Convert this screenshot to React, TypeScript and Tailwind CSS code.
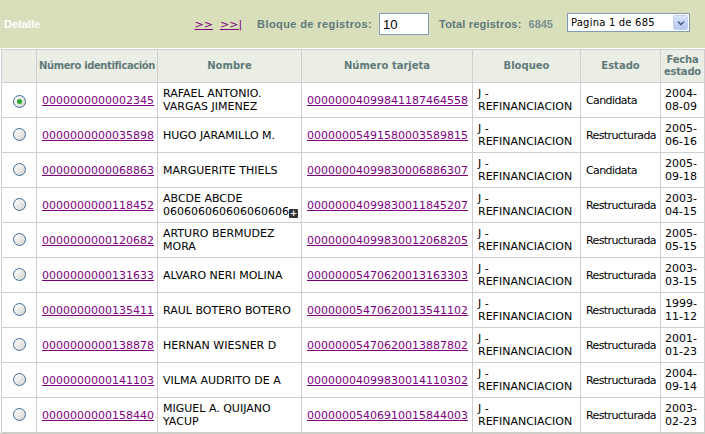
import React from "react";

type Row = {
  id: string;
  name: React.ReactNode;
  card: string;
  estado: string;
  fecha: [string, string];
};

const rows: Row[] = [
  { id: "0000000000002345", name: "RAFAEL ANTONIO. VARGAS JIMENEZ", card: "00000004099841187464558", estado: "Candidata", fecha: ["2004-", "08-09"] },
  { id: "0000000000035898", name: "HUGO JARAMILLO M.", card: "00000005491580003589815", estado: "Restructurada", fecha: ["2005-", "06-16"] },
  { id: "0000000000068863", name: "MARGUERITE THIELS", card: "00000004099830006886307", estado: "Candidata", fecha: ["2005-", "09-18"] },
  {
    id: "0000000000118452",
    name: (
      <>
        ABCDE ABCDE{" "}
        <span className="whitespace-nowrap">
          060606060606060606
          <span className="inline-flex items-center justify-center w-[9px] h-[9px] bg-[#333] text-white text-[9px] leading-none font-bold align-[-1px] rounded-[1px]">+</span>
        </span>
      </>
    ),
    card: "00000004099830011845207",
    estado: "Restructurada",
    fecha: ["2003-", "04-15"],
  },
  { id: "0000000000120682", name: "ARTURO BERMUDEZ MORA", card: "00000004099830012068205", estado: "Restructurada", fecha: ["2005-", "05-15"] },
  { id: "0000000000131633", name: "ALVARO NERI MOLINA", card: "00000005470620013163303", estado: "Restructurada", fecha: ["2003-", "03-15"] },
  { id: "0000000000135411", name: "RAUL BOTERO BOTERO", card: "00000005470620013541102", estado: "Restructurada", fecha: ["1999-", "11-12"] },
  { id: "0000000000138878", name: "HERNAN WIESNER D", card: "00000005470620013887802", estado: "Restructurada", fecha: ["2001-", "01-23"] },
  { id: "0000000000141103", name: "VILMA AUDRITO DE A", card: "00000004099830014110302", estado: "Restructurada", fecha: ["2004-", "09-14"] },
  { id: "0000000000158440", name: "MIGUEL A. QUIJANO YACUP", card: "00000005406910015844003", estado: "Restructurada", fecha: ["2003-", "02-23"] },
];

function Radio({ checked }: { checked?: boolean }) {
  return (
    <span className="inline-flex items-center justify-center w-[13px] h-[13px] rounded-full border border-[#3d6d99] bg-gradient-to-br from-white to-[#d4d4d0]">
      {checked && <span className="w-[5px] h-[5px] rounded-full bg-[#2fa52f]" />}
    </span>
  );
}

const th = "border border-[#cfcfcf] text-[10px] leading-[12px] font-bold text-[#5f7a7a] text-center px-0";
const td = "border border-[#cfcfcf] px-[5px] align-middle";

export default function App() {
  return (
    <div className="w-[705px] h-[434px] bg-white overflow-hidden font-['DejaVu_Sans',sans-serif] text-[11px] leading-[13px] text-black">
      {/* Barra superior */}
      <div className="h-[48px] bg-[#d9dfbb] flex items-center pl-[4px] pr-[15px]">
        <span className="font-['Liberation_Sans',sans-serif] font-bold text-white text-[11px] mt-[1px]">Detalle</span>
        <div className="ml-auto flex items-center">
          <a className="text-[#800080] underline" href="#">&gt;&gt;</a>
          <a className="text-[#800080] underline ml-[7px]" href="#">&gt;&gt;|</a>
          <span className="ml-[15px] font-['Liberation_Sans',sans-serif] font-bold text-[11px] tracking-[0.4px] text-[#5f7a7a]">Bloque de registros:</span>
          <div className="ml-[7px] w-[50px] h-[22px] border border-[#7f9db9] bg-white flex items-center pl-[3px] font-['Liberation_Sans',sans-serif] text-[13px]">10</div>
          <span className="ml-[10px] font-['Liberation_Sans',sans-serif] font-bold text-[11px] tracking-[0.2px] text-[#5f7a7a]">Total registros:</span>
          <span className="ml-[7px] font-['Liberation_Sans',sans-serif] font-bold text-[11px] text-[#7a9090]">6845</span>
          <div className="ml-[14px] w-[123px] h-[19px] border border-[#7f9db9] bg-white flex items-center mb-[3px]">
            <span className="pl-[3px] text-[10px] tracking-[0.2px] flex-1">Pagina 1 de 685</span>
            <span className="w-[15px] h-[15px] mr-[1px] rounded-[2px] bg-gradient-to-b from-[#dbe5fb] to-[#b5c8f3] border border-[#c3d1f3] flex items-center justify-center">
              <svg width="8" height="6" viewBox="0 0 8 6"><path d="M1 1.5 L4 4.5 L7 1.5" fill="none" stroke="#4d6185" strokeWidth="1.6" /></svg>
            </span>
          </div>
        </div>
      </div>

      {/* Tabla */}
      <table className="table-fixed border-collapse w-[703px] ml-[1px] mt-[1px]">
        <colgroup>
          <col className="w-[35px]" />
          <col className="w-[121px]" />
          <col className="w-[144px]" />
          <col className="w-[171px]" />
          <col className="w-[108px]" />
          <col className="w-[80px]" />
          <col className="w-[44px]" />
        </colgroup>
        <thead>
          <tr className="h-[33px] bg-[#ebeee4]">
            <th className={th}></th>
            <th className={th + " whitespace-nowrap tracking-[-0.4px]"}>Número identificación</th>
            <th className={th}>Nombre</th>
            <th className={th}>Número tarjeta</th>
            <th className={th}>Bloqueo</th>
            <th className={th}>Estado</th>
            <th className={th + " tracking-[-0.2px]"}>Fecha<br />estado</th>
          </tr>
        </thead>
        <tbody>
          {rows.map((r, i) => (
            <tr key={r.id} className="h-[35px]">
              <td className="border border-[#cfcfcf] text-center align-middle pt-[2px]">
                <Radio checked={i === 0} />
              </td>
              <td className={td}>
                <a href="#" className="text-[#800080] underline">{r.id}</a>
              </td>
              <td className={td}>{r.name}</td>
              <td className={td}>
                <a href="#" className="text-[#800080] underline">{r.card}</a>
              </td>
              <td className={td}>J - REFINANCIACION</td>
              <td className={td + " tracking-[-0.6px] whitespace-nowrap"}>{r.estado}</td>
              <td className="border border-[#cfcfcf] pl-[4px] pr-0 align-middle">
                {r.fecha[0]}
                <br />
                {r.fecha[1]}
              </td>
            </tr>
          ))}
        </tbody>
      </table>
      <div className="h-[3px] bg-[#c9cbbd]" />
    </div>
  );
}
